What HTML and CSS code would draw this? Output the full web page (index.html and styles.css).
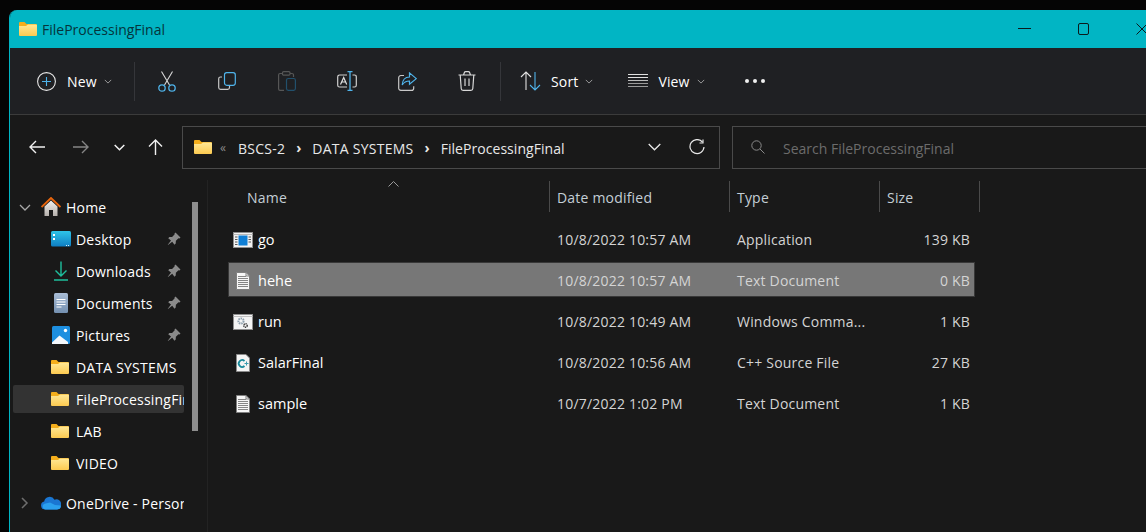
FILE: index.html
```html
<!DOCTYPE html>
<html>
<head>
    <title>FileProcessingFinal</title>
    <link rel="stylesheet" href="styles.css">
</head>
<body>
    <!-- shared icons -->
    <svg class="sprite">
        <defs>
            <linearGradient id="folderFront" x1="0" y1="0" x2="0" y2="1">
                <stop offset="0" stop-color="#ffe896"/>
                <stop offset="1" stop-color="#fcca50"/>
            </linearGradient>
            <linearGradient id="deskBlue" x1="0" y1="0" x2="0" y2="1">
                <stop offset="0" stop-color="#2fc4e8"/>
                <stop offset="1" stop-color="#0f7fc4"/>
            </linearGradient>
            <linearGradient id="houseGrey" x1="0" y1="0" x2="0" y2="1">
                <stop offset="0" stop-color="#f2efec"/>
                <stop offset="1" stop-color="#b5b0ac"/>
            </linearGradient>
            <linearGradient id="docBlue" x1="0" y1="0" x2="0" y2="1">
                <stop offset="0" stop-color="#a9bdd6"/>
                <stop offset="1" stop-color="#7490b0"/>
            </linearGradient>
            <symbol id="folder" viewBox="0 0 18 14">
                <path d="M0 1a1 1 0 0 1 1-1h4.500l2 2H17a1 1 0 0 1 1 1v3H0z" fill="#f4ae1c"/>
                <path d="M0 4h7l2-1.500h8a1 1 0 0 1 1 1V13a1 1 0 0 1-1 1H1a1 1 0 0 1-1-1z" fill="url(#folderFront)"/>
            </symbol>
            <symbol id="pin" viewBox="0 0 14 14">
                <path d="M8.500 .5l5 5-1 1-1-.3-2.600 2.600-.2 2.700-1.200 1.200-2.300-2.900L1 13l-.2-.2 3.200-4.200-2.800-2.300 1.200-1.200 2.700-.2L7.700 2.300l-.2-.8z" fill="#8b8b8b"/>
            </symbol>
            <symbol id="doc" viewBox="0 0 14 18">
                <path d="M.5 .5h9.500l3.500 3.500v13.500H.5z" fill="#f6f6f6" stroke="#808080"/>
                <path d="M2 4.500h8M2 6.500h10M2 8.500h10M2 10.500h10M2 12.500h10M2 14.500h10" stroke="#858585"/>
                <path d="M10 .5V4h3.500" fill="none" stroke="#808080"/>
            </symbol>
            <symbol id="chev" viewBox="0 0 10 6">
                <path d="M1 1l4 4 4-4" fill="none" stroke="currentColor" stroke-width="1.100"/>
            </symbol>
        </defs>
    </svg>

    <div class="window">
        <div class="titlebar">
            <svg class="folder-icon"><use href="#folder"/></svg>
            <span class="title-text">FileProcessingFinal</span>
            <div class="win-controls">
                <svg class="win-min" width="13" height="12" viewBox="0 0 13 12"><path d="M0 5.500h13" stroke="#0b1a1c"/></svg>
                <svg width="12" height="12" viewBox="0 0 12 12"><rect x="1.500" y=".5" width="10" height="11" rx="1.500" fill="none" stroke="#0b1a1c"/></svg>
                <svg width="12" height="12" viewBox="0 0 12 12"><path d="M.5 .5l11 11M11.500 .5l-11 11" stroke="#0b1a1c"/></svg>
            </div>
        </div>

        <div class="toolbar">
            <div class="tb-new">
                <svg width="19" height="19" viewBox="0 0 19 19"><circle cx="9.500" cy="9.500" r="8.900" fill="none" stroke="#e8e8e8" stroke-width="1.100"/><path d="M9.500 5v9M5 9.500h9" stroke="#4fb3ea" stroke-width="1.100"/></svg>
                <span>New</span>
                <svg class="tb-chev"><use href="#chev"/></svg>
            </div>
            <div class="tb-sep"></div>
            <div class="tb-btn">
                <svg width="18" height="21" viewBox="0 0 18 21"><path d="M3.500 .5l8 13.500M14.500 .5l-8 13.500" fill="none" stroke="#d8d8d8" stroke-width="1.100"/><circle cx="4" cy="17" r="3.200" fill="none" stroke="#4fb3ea" stroke-width="1.300"/><circle cx="14" cy="17" r="3.200" fill="none" stroke="#4fb3ea" stroke-width="1.300"/></svg>
            </div>
            <div class="tb-btn">
                <svg width="18" height="18" viewBox="0 0 18 18"><path d="M4 5H2.500A1.800 1.800 0 0 0 .7 6.800v8.700a1.800 1.800 0 0 0 1.800 1.800h7.200a1.800 1.800 0 0 0 1.800-1.800V14" fill="none" stroke="#c8c8c8" stroke-width="1.200"/><rect x="6.500" y=".7" width="10.800" height="12.600" rx="2.200" fill="none" stroke="#4fb3ea" stroke-width="1.200"/></svg>
            </div>
            <div class="tb-btn">
                <svg width="18" height="20" viewBox="0 0 18 20"><path d="M4 2.500H2A1.500 1.500 0 0 0 .6 4v14A1.500 1.500 0 0 0 2 19.400h4M12 2.500h2a1.500 1.500 0 0 1 1.500 1.500v2" fill="none" stroke="#565656" stroke-width="1.200"/><rect x="4.500" y=".6" width="7.500" height="3.600" rx="1.200" fill="none" stroke="#565656" stroke-width="1.200"/><rect x="8.500" y="7.500" width="8.900" height="11.900" rx="1.800" fill="none" stroke="#22506c" stroke-width="1.200"/></svg>
            </div>
            <div class="tb-btn">
                <svg width="20" height="20" viewBox="0 0 20 20"><path d="M10 4H2.500A1.800 1.800 0 0 0 .7 5.800v8.400A1.800 1.800 0 0 0 2.500 16H10M15.500 4h2a1.800 1.800 0 0 1 1.800 1.800v8.400a1.800 1.800 0 0 1-1.800 1.800h-2" fill="none" stroke="#d0d0d0" stroke-width="1.200"/><path d="M3.500 13.500L6.700 6.500l3 7M4.800 11h4" fill="none" stroke="#e0e0e0" stroke-width="1.200"/><path d="M13 .7v18.600M10.500 .7h5M10.500 19.300h5" fill="none" stroke="#4fb3ea" stroke-width="1.300"/></svg>
            </div>
            <div class="tb-btn">
                <svg width="19" height="19" viewBox="0 0 19 19"><path d="M6 3.500H3A2.200 2.200 0 0 0 .7 5.700v10.500A2.200 2.200 0 0 0 3 18.400h10.500a2.200 2.200 0 0 0 2.200-2.200v-2" fill="none" stroke="#c8c8c8" stroke-width="1.200"/><path d="M11.500 .9l6.800 5.700-6.800 5.700V9C8.500 9 6 10 4.200 13c.3-4.800 3-8 7.300-8z" fill="none" stroke="#4fb3ea" stroke-width="1.200"/></svg>
            </div>
            <div class="tb-btn">
                <svg width="18" height="20" viewBox="0 0 18 20"><path d="M.5 4h17M5.500 4l.8-2.300A1.500 1.500 0 0 1 7.700 .7h2.600a1.500 1.500 0 0 1 1.400 1L12.500 4M2.200 4l1 13.500a1.900 1.900 0 0 0 1.900 1.800h7.800a1.900 1.900 0 0 0 1.900-1.800L15.800 4M7 7.500v7.500M11 7.500v7.500" fill="none" stroke="#d8d8d8" stroke-width="1.200"/></svg>
            </div>
            <div class="tb-sep tb-sep-end"></div>
            <div class="tb-sort">
                <svg width="21" height="20" viewBox="0 0 21 20"><path d="M6 19V1M1 6l5-5 5 5" fill="none" stroke="#e0e0e0" stroke-width="1.100"/><path d="M15 1v18M10 14l5 5 5-5" fill="none" stroke="#4fb3ea" stroke-width="1.100"/></svg>
                <span>Sort</span>
                <svg class="tb-chev"><use href="#chev"/></svg>
            </div>
            <div class="tb-view">
                <svg width="20" height="14" viewBox="0 0 20 14"><path d="M0 .5h20M0 3.500h20" stroke="#e0e0e0"/><path d="M0 6.500h20" stroke="#bcbcbc"/><path d="M0 9.500h20M0 12.500h20" stroke="#9a9a9a"/></svg>
                <span>View</span>
                <svg class="tb-chev"><use href="#chev"/></svg>
            </div>
            <div class="tb-more"><i></i><i></i><i></i></div>
        </div>

        <div class="addressrow">
            <div class="nav-btns">
                <svg class="nav-back" width="16" height="14" viewBox="0 0 16 14"><path d="M16 7H1M7 1L1 7l6 6" fill="none" stroke="#f0f0f0" stroke-width="1.400"/></svg>
                <svg class="nav-fwd" width="16" height="14" viewBox="0 0 16 14"><path d="M0 7h15M9 1l6 6-6 6" fill="none" stroke="#858585" stroke-width="1.400"/></svg>
                <svg class="nav-down" width="11" height="7" viewBox="0 0 11 7"><path d="M.7 1l4.800 4.800L10.300 1" fill="none" stroke="#f0f0f0" stroke-width="1.500"/></svg>
                <svg class="nav-up" width="15" height="16" viewBox="0 0 15 16"><path d="M7.500 16V1M1 7.500l6.500-6.500 6.500 6.500" fill="none" stroke="#f0f0f0" stroke-width="1.400"/></svg>
            </div>
            <div class="addressbox">
                <svg class="folder-icon"><use href="#folder"/></svg>
                <span class="crumb-more">«</span>
                <span class="crumb">BSCS-2</span>
                <span class="crumb-sep">›</span>
                <span class="crumb">DATA SYSTEMS</span>
                <span class="crumb-sep">›</span>
                <span class="crumb crumb-last">FileProcessingFinal</span>
                <svg class="addr-chev" width="13" height="8" viewBox="0 0 13 8"><path d="M.7 1l5.800 5.800L12.300 1" fill="none" stroke="#e8e8e8" stroke-width="1.300"/></svg>
                <svg class="addr-refresh" width="16" height="16" viewBox="0 0 16 16"><path d="M13.500 3.200A7 7 0 1 0 15 8" fill="none" stroke="#e8e8e8" stroke-width="1.200"/><path d="M14 .5v3.500h-3.500" fill="none" stroke="#e8e8e8" stroke-width="1.200"/></svg>
            </div>
            <div class="searchbox">
                <svg width="14" height="14" viewBox="0 0 14 14"><circle cx="5.500" cy="5.500" r="4.700" fill="none" stroke="#8a8a8a"/><path d="M9 9l4.500 4.500" stroke="#8a8a8a"/></svg>
                <span>Search FileProcessingFinal</span>
            </div>
        </div>

        <div class="main">
            <div class="sidebar">
                <div class="tree">
                    <div class="tree-row top">
                        <svg class="tree-chev" width="12" height="7" viewBox="0 0 12 7"><path d="M1 1l5 5 5-5" fill="none" stroke="#a8a8a8" stroke-width="1.300"/></svg>
                        <svg class="tree-icon" viewBox="0 0 20 20"><path d="M3.500 9.500L10 3.500l6.500 6V19H12v-6H8v6H3.500z" fill="url(#houseGrey)"/><path d="M.5 10L10 1l9.500 9" fill="none" stroke="#e8650c" stroke-width="1.900"/></svg>
                        <span class="tree-label">Home</span>
                    </div>
                    <div class="tree-row">
                        <svg class="tree-icon" viewBox="0 0 20 20"><rect y="2" width="20" height="15.500" rx="1.500" fill="url(#deskBlue)"/><path d="M2 5h2v2H2zM2 9h2v2H2z" fill="#fff"/><path d="M15 16.500h1M17 16.500h1" stroke="#d8f0fa"/></svg>
                        <span class="tree-label">Desktop</span>
                        <svg class="pin"><use href="#pin"/></svg>
                    </div>
                    <div class="tree-row">
                        <svg class="tree-icon" viewBox="0 0 20 20"><path d="M10 .5V15M4.500 9.500L10 15l5.500-5.500" fill="none" stroke="#1ebf9d" stroke-width="1.400"/><path d="M3 19h14" stroke="#1ebf9d" stroke-width="1.500"/></svg>
                        <span class="tree-label">Downloads</span>
                        <svg class="pin"><use href="#pin"/></svg>
                    </div>
                    <div class="tree-row">
                        <svg class="tree-icon" viewBox="0 0 20 20"><rect x="3" y="0" width="14" height="20" rx="1.500" fill="url(#docBlue)"/><path d="M5.500 6.500h9M5.500 9h9M5.500 11.500h9M5.500 14h5" stroke="#fff"/></svg>
                        <span class="tree-label">Documents</span>
                        <svg class="pin"><use href="#pin"/></svg>
                    </div>
                    <div class="tree-row">
                        <svg class="tree-icon" viewBox="0 0 20 20"><rect x="1" y="1" width="18" height="18" rx="1.500" fill="#1d8fe0"/><circle cx="14.500" cy="5.500" r="1.700" fill="#fff"/><path d="M1 17.500L8.500 10.500 17 17v2H1z" fill="#f4f8fc"/></svg>
                        <span class="tree-label">Pictures</span>
                        <svg class="pin"><use href="#pin"/></svg>
                    </div>
                    <div class="tree-row">
                        <svg class="folder-icon"><use href="#folder"/></svg>
                        <span class="tree-label">DATA SYSTEMS</span>
                    </div>
                    <div class="tree-row current">
                        <svg class="folder-icon"><use href="#folder"/></svg>
                        <span class="tree-label">FileProcessingFinal</span>
                    </div>
                    <div class="tree-row">
                        <svg class="folder-icon"><use href="#folder"/></svg>
                        <span class="tree-label">LAB</span>
                    </div>
                    <div class="tree-row">
                        <svg class="folder-icon"><use href="#folder"/></svg>
                        <span class="tree-label">VIDEO</span>
                    </div>
                    <div class="tree-row top group-start">
                        <svg class="tree-chev" width="12" height="12" viewBox="0 0 12 12"><path d="M3 1l5 5-5 5" fill="none" stroke="#6e6e6e" stroke-width="1.500"/></svg>
                        <svg class="tree-icon" viewBox="0 0 20 20"><path d="M4 16.500a4 4 0 0 1-.8-7.900 5.500 5.500 0 0 1 10.300-1.800A4.700 4.700 0 0 1 19.900 12.500a4 4 0 0 1-3.900 4z" fill="#1a76d2"/><path d="M4.500 16.500a3 3 0 0 1-1-5.800L9 9.500l5 2.500 5.900 .5A4 4 0 0 1 16 16.500z" fill="#2ba0ee"/></svg>
                        <span class="tree-label">OneDrive - Personal</span>
                    </div>
                </div>
                <div class="scrollbar"></div>
            </div>

            <div class="list">
                <div class="list-head">
                    <div class="head-cell head-name">Name<svg class="sort-mark" width="11" height="6" viewBox="0 0 11 6"><path d="M.5 5.500l5-5 5 5" fill="none" stroke="#9a9a9a"/></svg></div>
                    <div class="head-cell head-date">Date modified</div>
                    <div class="head-cell head-type">Type</div>
                    <div class="head-cell head-size">Size</div>
                </div>

                <div class="file-row">
                    <svg class="file-icon" width="20" height="16" viewBox="0 0 20 16"><rect x=".5" y=".5" width="19" height="15" fill="#f2f2f2" stroke="#8e8e8e"/><path d="M.5 2.500h19" stroke="#b8b8b8"/><rect x="5.500" y="3.500" width="9" height="10" fill="#0f7fd6"/><path d="M2 5h2.500M2 7.500h2.500M2 10h2.500M2 12.500h2.500M15.500 5H18M15.500 7.500H18M15.500 10H18" stroke="#555"/></svg>
                    <span class="file-name">go</span>
                    <span>10/8/2022 10:57 AM</span>
                    <span>Application</span>
                    <span class="file-size">139 KB</span>
                </div>
                <div class="file-row selected">
                    <svg class="file-icon" width="14" height="18"><use href="#doc"/></svg>
                    <span class="file-name">hehe</span>
                    <span>10/8/2022 10:57 AM</span>
                    <span>Text Document</span>
                    <span class="file-size">0 KB</span>
                </div>
                <div class="file-row">
                    <svg class="file-icon" width="20" height="16" viewBox="0 0 20 16"><rect x=".5" y=".5" width="19" height="15" fill="#f4f4f4" stroke="#8e8e8e"/><path d="M.5 2.500h19" stroke="#c0c0c0"/><circle cx="8" cy="7" r="2.600" fill="none" stroke="#8ea0ae" stroke-width="2" stroke-dasharray="1.500 .8"/><circle cx="12.500" cy="11.500" r="1.700" fill="none" stroke="#3c3c3c" stroke-width="1.500" stroke-dasharray="1.200 .6"/></svg>
                    <span class="file-name">run</span>
                    <span>10/8/2022 10:49 AM</span>
                    <span>Windows Comma...</span>
                    <span class="file-size">1 KB</span>
                </div>
                <div class="file-row">
                    <svg class="file-icon" width="14" height="18" viewBox="0 0 14 18"><path d="M.5 .5h9.500l3.500 3.500v13.500H.5z" fill="#f4f4f4" stroke="#8a8a8a"/><path d="M8.500 7A3.400 3.400 0 1 0 8.500 12" fill="none" stroke="#1a8a9c" stroke-width="1.800"/><path d="M8.500 9.500h4M10.500 7.500v4" stroke="#3c9cb0"/></svg>
                    <span class="file-name">SalarFinal</span>
                    <span>10/8/2022 10:56 AM</span>
                    <span>C++ Source File</span>
                    <span class="file-size">27 KB</span>
                </div>
                <div class="file-row">
                    <svg class="file-icon" width="14" height="18"><use href="#doc"/></svg>
                    <span class="file-name">sample</span>
                    <span>10/7/2022 1:02 PM</span>
                    <span>Text Document</span>
                    <span class="file-size">1 KB</span>
                </div>
            </div>
        </div>
    </div>
</body>
</html>
```

FILE: styles.css
```css
body {
    margin: 0;
    background-color: #050505;
    font-family: "Open Sans", "Noto Sans", sans-serif;
    font-size: 14px;
    color: #fff;
    overflow: hidden;
}
span {
    white-space: nowrap;
}
.sprite {
    position: absolute;
    width: 0;
    height: 0;
}
.window {
    display: flex;
    flex-direction: column;
    height: 522px;
    margin: 10px 0 0 9px;
    border-left: 1px solid #01b5c4;
    border-top-left-radius: 8px;
    background-color: #191919;
    overflow: hidden;
}
.folder-icon {
    flex: none;
    width: 18px;
    height: 14px;
}

/* title bar */
.titlebar {
    display: flex;
    flex: none;
    align-items: center;
    height: 38px;
    padding-left: 9px;
    background-color: #01b5c4;
}
.title-text {
    margin-left: 5px;
    color: #05343b;
}
.win-controls {
    display: flex;
    align-items: center;
    gap: 47px;
    margin-left: auto;
    margin-right: -2px;
}
.win-min {
    margin-right: -1px;
}

/* toolbar */
.toolbar {
    display: flex;
    flex: none;
    align-items: center;
    height: 67px;
    box-sizing: border-box;
    border-bottom: 1px solid #3b3b3b;
    background-color: #1f2023;
    letter-spacing: 0.15px;
}
.tb-new {
    display: flex;
    align-items: center;
    width: 124px;
    padding-left: 27px;
    box-sizing: border-box;
}
.tb-new span {
    margin-left: 11px;
}
.tb-chev {
    width: 8px;
    height: 5px;
    color: #a8a8a8;
    margin-left: 7px;
}
.tb-sep {
    flex: none;
    width: 1px;
    height: 39px;
    background-color: #35363a;
}
.tb-sep-end {
    margin-left: 3px;
}
.tb-btn {
    display: flex;
    flex: none;
    align-items: center;
    justify-content: center;
    width: 60px;
}
.tb-sep + .tb-btn {
    margin-left: 2px;
}
.tb-sort, .tb-view {
    display: flex;
    align-items: center;
}
.tb-sort {
    margin-left: 19px;
}
.tb-sort span {
    margin-left: 10px;
}
.tb-view {
    margin-left: 35px;
}
.tb-view span {
    margin-left: 10px;
}
.tb-more {
    display: flex;
    gap: 4px;
    margin-left: 40px;
}
.tb-more i {
    width: 4px;
    height: 4px;
    border-radius: 50%;
    background-color: #f0f0f0;
}

/* address row */
.addressrow {
    display: flex;
    flex: none;
    align-items: center;
    height: 65px;
    padding-bottom: 1px;
    box-sizing: border-box;
}
.nav-btns {
    display: flex;
    align-items: center;
    width: 172px;
    flex: none;
}
.nav-back {
    margin-left: 19px;
}
.nav-fwd {
    margin-left: 28px;
}
.nav-down {
    margin-left: 25px;
}
.nav-up {
    margin-left: 23px;
}
.addressbox, .searchbox {
    display: flex;
    align-items: center;
    height: 43px;
    box-sizing: border-box;
    border: 1px solid #4a4a4a;
}
.addressbox {
    width: 538px;
    flex: none;
    padding-left: 11px;
}
.crumb-more {
    margin-left: 8px;
    color: #8a8a8a;
    font-size: 12px;
}
.crumb-more + .crumb {
    margin-left: 12px;
}
.crumb {
    padding-top: 2px;
    color: #e8e8e8;
    letter-spacing: 0.25px;
}
.crumb-last {
    letter-spacing: 0.05px;
}
.crumb-sep {
    margin: 0 11px;
    color: #e8e8e8;
    font-weight: bold;
}
.addr-chev {
    margin-left: auto;
}
.addr-refresh {
    margin-left: 28px;
    margin-right: 14px;
}
.searchbox {
    flex: 1;
    margin-left: 12px;
    padding-left: 18px;
    border-right: none;
    color: #6c6c6c;
}
.searchbox span {
    margin-left: 18px;
    padding-top: 2px;
}

/* navigation tree */
.main {
    display: flex;
    flex: 1;
    min-height: 0;
}
.sidebar {
    display: flex;
    flex: none;
    width: 197px;
    border-right: 1px solid #232323;
}
.tree {
    display: flex;
    flex-direction: column;
    flex: none;
    gap: 4px;
    width: 171px;
    margin-left: 3px;
    padding-top: 13px;
    letter-spacing: 0.2px;
}
.tree-row {
    display: flex;
    flex: none;
    align-items: center;
    height: 28px;
    padding-left: 38px;
    overflow: hidden;
}
.tree-row.top {
    padding-left: 0;
}
.tree-row.group-start {
    margin-top: 8px;
}
.tree-row.current {
    background-color: #333333;
    border-radius: 2px;
}
.tree-chev {
    flex: none;
    width: 12px;
    margin-left: 6px;
    margin-right: 10px;
}
.tree-icon {
    flex: none;
    width: 20px;
    height: 20px;
}
.folder-icon + .tree-label {
    margin-left: 7px;
}
.tree-label {
    flex: 1;
    margin-left: 5px;
    white-space: nowrap;
    overflow: hidden;
}
.pin {
    flex: none;
    width: 14px;
    height: 14px;
    margin-right: 3px;
}
.scrollbar {
    flex: none;
    width: 6px;
    height: 229px;
    margin: 22px 0 0 8px;
    background-color: #8e8e8e;
}

/* file list */
.list {
    flex: 1;
    padding-left: 20px;
    color: #d4d4d4;
    letter-spacing: 0.2px;
}
.list-head {
    display: flex;
    height: 31px;
    margin-top: 1px;
    margin-bottom: 9px;
    color: #c4ced6;
}
.head-cell {
    position: relative;
    display: flex;
    align-items: center;
    box-sizing: border-box;
    padding-top: 2px;
    padding-left: 7px;
    border-right: 1px solid #4a4a4a;
}
.head-name {
    width: 322px;
    padding-left: 19px;
}
.head-date {
    width: 180px;
}
.head-type {
    width: 150px;
}
.head-size {
    width: 100px;
}
.sort-mark {
    position: absolute;
    left: 160px;
    top: 0;
}
.file-row {
    display: grid;
    grid-template-columns: 30px 299px 180px 150px 83px;
    align-items: center;
    width: 747px;
    height: 35px;
    padding-top: 2px;
    margin-bottom: 6px;
    box-sizing: border-box;
}
.file-row.selected {
    background-color: #777777;
    outline: 1px solid #383838;
    outline-offset: -1px;
}
.file-icon {
    justify-self: center;
}
.file-name {
    color: #fff;
    font-size: 14.5px;
    letter-spacing: 0;
}
.file-size {
    text-align: right;
}
```
